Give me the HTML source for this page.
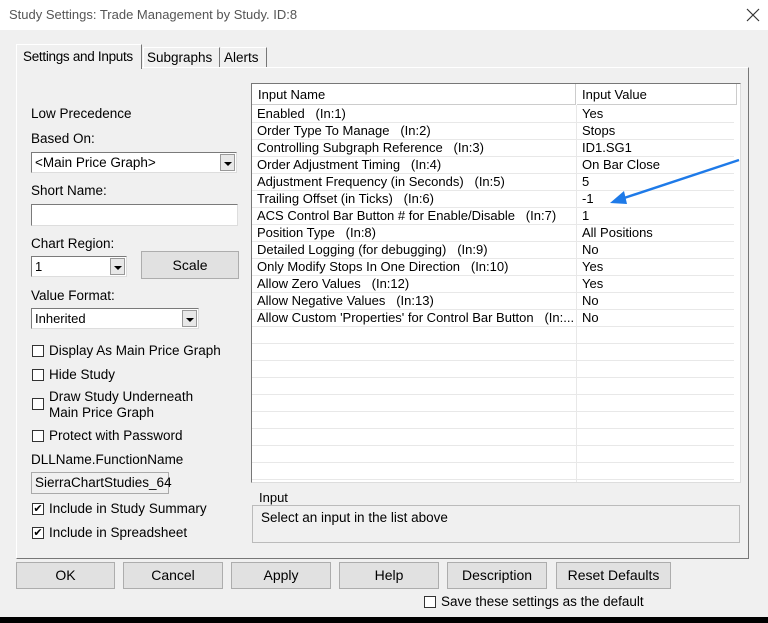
<!DOCTYPE html>
<html><head><style>
*{box-sizing:border-box;margin:0;padding:0}
body{width:768px;height:623px;background:#f0f0f0;font-family:"Liberation Sans",sans-serif;font-size:13px;color:#000;position:relative;overflow:hidden}
.a{position:absolute;white-space:nowrap}
.title{left:0;top:0;width:768px;height:30px;background:#fff;}
.btn{position:absolute;top:562px;height:27px;background:#e1e1e1;border:1px solid #adadad;text-align:center;line-height:25px;font-size:14px}
.cb{position:absolute;width:12px;height:12px;border:1px solid #333;background:#fff}
.inp{position:absolute;background:#fff;border:1px solid #7a7a7a;border-right-color:#ddd;border-bottom-color:#ddd}
.dd{position:absolute;width:15px;height:17px;background:#e8e8e8;border:1px solid #999;top:1px;right:1px}
.dd:after{content:"";position:absolute;left:3px;top:7px;border-left:4px solid transparent;border-right:4px solid transparent;border-top:4px solid #000}
.row{position:absolute;left:0;width:482px;height:17px;border-bottom:1px solid #e8e8e8;font-size:13px;line-height:16px}
.row span{position:absolute;left:5px}
.row b{font-weight:normal;position:absolute;left:330px}
.lbl{font-size:13.5px}
</style></head><body>
<div class="a title"><span class="a" style="left:9px;top:7px;color:#555;font-size:13px">Study Settings: Trade Management by Study. ID:8</span>
<svg class="a" style="left:746px;top:8px" width="14" height="14"><path d="M1 1L13 13M13 1L1 13" stroke="#333" stroke-width="1.2"/></svg></div>
<!-- tab panel -->
<div class="a" style="left:16px;top:67px;width:733px;height:492px;border:1px solid #fff;border-right-color:#777;border-bottom-color:#777"></div>
<div class="a" style="left:16px;top:44px;width:126px;height:25px;background:#f0f0f0;border:1px solid #fff;border-bottom:none;border-right-color:#777"><span class="a" style="left:6px;top:4px;font-size:13.5px;letter-spacing:-0.3px">Settings and Inputs</span></div>
<div class="a" style="left:143px;top:47px;width:77px;height:20px;border-right:1px solid #777;border-left:1px solid #fff;border-top:1px solid #fff"><span class="a" style="left:3px;top:2px;font-size:13.5px">Subgraphs</span></div>
<div class="a" style="left:221px;top:47px;width:46px;height:20px;border-right:1px solid #777;border-top:1px solid #fff"><span class="a" style="left:3px;top:2px;font-size:13.5px">Alerts</span></div>
<!-- left -->
<span class="a lbl" style="left:31px;top:106px">Low Precedence</span>
<span class="a lbl" style="left:31px;top:131px">Based On:</span>
<div class="inp" style="left:31px;top:152px;width:206px;height:21px"><span class="a" style="left:3px;top:2px;font-size:13.5px">&lt;Main Price Graph&gt;</span><div class="dd"></div></div>
<span class="a lbl" style="left:31px;top:183px">Short Name:</span>
<div class="inp" style="left:31px;top:204px;width:207px;height:22px"></div>
<span class="a lbl" style="left:31px;top:236px">Chart Region:</span>
<div class="inp" style="left:31px;top:256px;width:96px;height:21px"><span class="a" style="left:3px;top:2px">1</span><div class="dd"></div></div>
<div class="a" style="left:141px;top:251px;width:98px;height:28px;background:#e1e1e1;border:1px solid #adadad;text-align:center;line-height:26px;font-size:14px">Scale</div>
<span class="a lbl" style="left:31px;top:288px">Value Format:</span>
<div class="inp" style="left:31px;top:308px;width:168px;height:21px"><span class="a" style="left:3px;top:2px">Inherited</span><div class="dd"></div></div>
<div class="cb" style="left:32px;top:345px"></div><span class="a lbl" style="left:49px;top:343px">Display As Main Price Graph</span>
<div class="cb" style="left:32px;top:369px"></div><span class="a lbl" style="left:49px;top:367px">Hide Study</span>
<div class="cb" style="left:32px;top:398px"></div><span class="a lbl" style="left:49px;top:389px;line-height:16px">Draw Study Underneath<br>Main Price Graph</span>
<div class="cb" style="left:32px;top:430px"></div><span class="a lbl" style="left:49px;top:428px">Protect with Password</span>
<span class="a lbl" style="left:31px;top:452px">DLLName.FunctionName</span>
<div class="a" style="left:31px;top:472px;width:138px;height:22px;border:1px solid #aaa;background:#f0f0f0"><span class="a" style="left:3px;top:2px;font-size:13.5px">SierraChartStudies_64</span></div>
<div class="cb" style="left:32px;top:503px;font-size:11px;line-height:10px;text-align:center">✔</div><span class="a lbl" style="left:49px;top:501px">Include in Study Summary</span>
<div class="cb" style="left:32px;top:527px;font-size:11px;line-height:10px;text-align:center">✔</div><span class="a lbl" style="left:49px;top:525px">Include in Spreadsheet</span>
<!-- table -->
<div class="a" style="left:251px;top:83px;width:490px;height:400px;background:#fff;border:1px solid #777;border-right-color:#ddd;border-bottom-color:#ddd;overflow:hidden">
<div class="a" style="left:0;top:0;width:324px;height:21px;border-right:1px solid #ccc;border-bottom:1px solid #ccc"><span class="a" style="left:6px;top:3px">Input Name</span></div>
<div class="a" style="left:325px;top:0;width:160px;height:21px;border-right:1px solid #ccc;border-bottom:1px solid #ccc"><span class="a" style="left:5px;top:3px">Input Value</span></div>
<div class="a" style="left:324px;top:21px;width:1px;height:380px;background:#e8e8e8"></div>
<div class="a" style="left:0;top:22px">
<div class="row" style="top:0"><span>Enabled&nbsp;&nbsp; (In:1)</span><b>Yes</b></div>
<div class="row" style="top:17px"><span>Order Type To Manage&nbsp;&nbsp; (In:2)</span><b>Stops</b></div>
<div class="row" style="top:34px"><span>Controlling Subgraph Reference&nbsp;&nbsp; (In:3)</span><b>ID1.SG1</b></div>
<div class="row" style="top:51px"><span>Order Adjustment Timing&nbsp;&nbsp; (In:4)</span><b>On Bar Close</b></div>
<div class="row" style="top:68px"><span>Adjustment Frequency (in Seconds)&nbsp;&nbsp; (In:5)</span><b>5</b></div>
<div class="row" style="top:85px"><span>Trailing Offset (in Ticks)&nbsp;&nbsp; (In:6)</span><b>-1</b></div>
<div class="row" style="top:102px"><span>ACS Control Bar Button # for Enable/Disable&nbsp;&nbsp; (In:7)</span><b>1</b></div>
<div class="row" style="top:119px"><span>Position Type&nbsp;&nbsp; (In:8)</span><b>All Positions</b></div>
<div class="row" style="top:136px"><span>Detailed Logging (for debugging)&nbsp;&nbsp; (In:9)</span><b>No</b></div>
<div class="row" style="top:153px"><span>Only Modify Stops In One Direction&nbsp;&nbsp; (In:10)</span><b>Yes</b></div>
<div class="row" style="top:170px"><span>Allow Zero Values&nbsp;&nbsp; (In:12)</span><b>Yes</b></div>
<div class="row" style="top:187px"><span>Allow Negative Values&nbsp;&nbsp; (In:13)</span><b>No</b></div>
<div class="row" style="top:204px"><span>Allow Custom 'Properties' for Control Bar Button&nbsp;&nbsp; (In:...</span><b>No</b></div>
<div class="row" style="top:221px"></div><div class="row" style="top:238px"></div><div class="row" style="top:255px"></div><div class="row" style="top:272px"></div><div class="row" style="top:289px"></div><div class="row" style="top:306px"></div><div class="row" style="top:323px"></div><div class="row" style="top:340px"></div><div class="row" style="top:357px"></div>
</div></div>
<svg class="a" style="left:600px;top:150px" width="150" height="60"><line x1="139" y1="10" x2="18" y2="50" stroke="#1e7ae8" stroke-width="2.5"/><polygon points="10,53 24,41 27,54" fill="#1e7ae8"/></svg>
<!-- input group -->
<div class="a" style="left:252px;top:505px;width:488px;height:38px;border:1px solid #bbb"></div>
<span class="a" style="left:258px;top:490px;background:#f0f0f0;padding:0 1px;font-size:13px">Input</span>
<span class="a" style="left:261px;top:510px;font-size:13.5px">Select an input in the list above</span>
<!-- buttons -->
<div class="btn" style="left:16px;width:99px">OK</div>
<div class="btn" style="left:123px;width:100px">Cancel</div>
<div class="btn" style="left:231px;width:100px">Apply</div>
<div class="btn" style="left:339px;width:100px">Help</div>
<div class="btn" style="left:447px;width:100px">Description</div>
<div class="btn" style="left:556px;width:115px">Reset Defaults</div>
<div class="cb" style="left:424px;top:596px"></div><span class="a" style="left:441px;top:594px;font-size:13.5px">Save these settings as the default</span>
<div class="a" style="left:0;top:617px;width:768px;height:6px;background:#000"></div>
</body></html>
